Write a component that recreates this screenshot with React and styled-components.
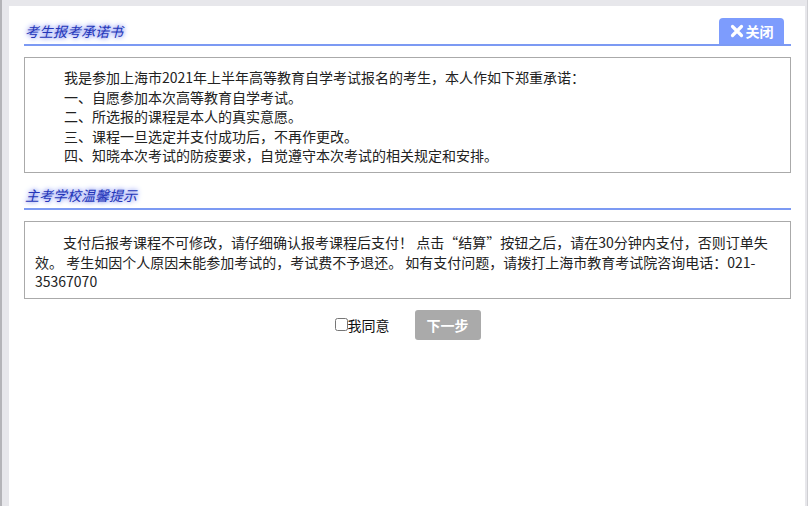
import React from "react";
import styled, { createGlobalStyle } from "styled-components";

const Global = createGlobalStyle`
  html, body { margin: 0; padding: 0; }
  body {
    background: #e7e7eb;
    font-family: "Microsoft YaHei", "Noto Sans CJK SC", "Noto Sans", sans-serif;
    font-size: 14px;
    color: #222;
  }
`;

const Frame = styled.div`
  height: 506px;
  box-sizing: border-box;
  padding: 6px 2px 0 7px;
  border-left: 2px solid #b4b4b8;
  border-right: 1px solid #cfcfd3;
  display: flex;
`;

const Panel = styled.div`
  flex: 1;
  background: #fff;
  padding: 12px 14px 0 15px;
  box-sizing: border-box;
  display: flex;
  flex-direction: column;
`;

const Header = styled.div`
  height: 26px;
  border-bottom: 2px solid #7c9af3;
  display: flex;
  align-items: center;
  justify-content: space-between;
  margin-top: ${(p) => p.$top || 0}px;
`;

const Title = styled.h3`
  margin: 0 0 0 1px;
  font-size: 14px;
  font-weight: normal;
  font-style: italic;
  color: #2436b8;
  text-shadow: 0 0 4px #7d8cf0, 0 0 6px #a7b2f7;
  line-height: 26px;
`;

const CloseButton = styled.button`
  height: 26px;
  width: 65px;
  margin-right: 7px;
  border: none;
  border-radius: 4px 4px 0 0;
  background: #7d9cfd;
  color: #fff;
  font-family: inherit;
  font-size: 14px;
  font-weight: bold;
  display: flex;
  align-items: center;
  justify-content: center;
  gap: 2px;
  padding: 0;
  cursor: pointer;
`;

const Box = styled.div`
  margin-top: 11px;
  border: 1px solid #aaa;
  padding: ${(p) => p.$pad};
  line-height: 19.6px;
  font-size: 14px;
`;

const Para = styled.p`
  margin: 0;
  text-indent: ${(p) => (p.$indent ? "28px" : "0")};
`;

const AgreeRow = styled.div`
  margin-top: 11px;
  display: flex;
  justify-content: center;
  align-items: center;
  gap: 25px;
`;

const Agree = styled.label`
  display: flex;
  align-items: center;
  font-size: 14px;
  color: #111;
`;

const Check = styled.input`
  width: 13px;
  height: 13px;
  margin: 0 0 0 0;
`;

const NextButton = styled.button`
  width: 66px;
  height: 30px;
  border: none;
  border-radius: 3px;
  background: #aaaaaa;
  color: #fff;
  font-family: inherit;
  font-size: 14px;
  font-weight: bold;
  padding: 0;
`;

const XIcon = () => (
  <svg width="14" height="14" viewBox="0 0 14 14">
    <path d="M2.5 2.5 L11.5 11.5 M11.5 2.5 L2.5 11.5" stroke="#fff" strokeWidth="3.2" strokeLinecap="round" />
  </svg>
);

export default function App() {
  return (
    <>
      <Global />
      <Frame>
        <Panel>
          <Header>
            <Title>考生报考承诺书</Title>
            <CloseButton>
              <XIcon />
              关闭
            </CloseButton>
          </Header>
          <Box $pad="10px 10px 6px 11px">
            <Para $indent>我是参加上海市2021年上半年高等教育自学考试报名的考生，本人作如下郑重承诺：</Para>
            <Para $indent>一、自愿参加本次高等教育自学考试。</Para>
            <Para $indent>二、所选报的课程是本人的真实意愿。</Para>
            <Para $indent>三、课程一旦选定并支付成功后，不再作更改。</Para>
            <Para $indent>四、知晓本次考试的防疫要求，自觉遵守本次考试的相关规定和安排。</Para>
          </Box>
          <Header $top={9}>
            <Title>主考学校温馨提示</Title>
          </Header>
          <Box $pad="11px 10px 6px 10px">
            <Para $indent>
              支付后报考课程不可修改，请仔细确认报考课程后支付！ 点击“结算”按钮之后，请在30分钟内支付，否则订单失效。 考生如因个人原因未能参加考试的，考试费不予退还。 如有支付问题，请拨打上海市教育考试院咨询电话：021-35367070
            </Para>
          </Box>
          <AgreeRow>
            <Agree>
              <Check type="checkbox" />
              我同意
            </Agree>
            <NextButton>下一步</NextButton>
          </AgreeRow>
        </Panel>
      </Frame>
    </>
  );
}
